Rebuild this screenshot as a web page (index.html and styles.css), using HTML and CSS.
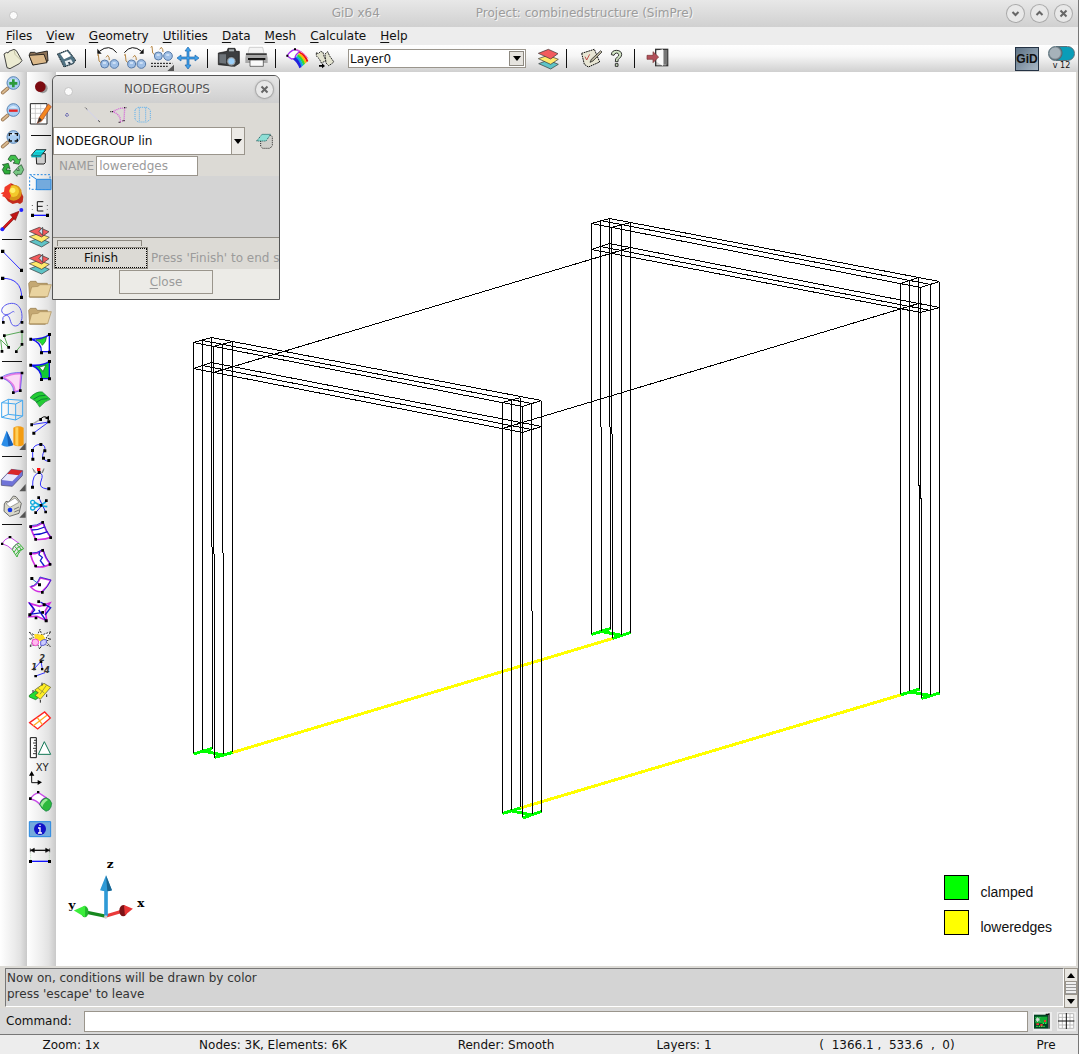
FILE: index.html
```html
<!DOCTYPE html>
<html lang="en">
<head>
<meta charset="utf-8">
<title>GiD x64 - Project: combinedstructure (SimPre)</title>
<link rel="stylesheet" href="styles.css">
</head>
<body>
<div class="app">
  <header class="titlebar">
    <span class="dot"></span>
    <h1 class="title"><span>GiD x64</span><span>Project: combinedstructure (SimPre)</span></h1>
    <div class="winbtns">
      <button class="round" aria-label="Minimize"><svg viewBox="0 0 17 17"><path d="M5.500 7l3 3 3-3"/></svg></button>
      <button class="round" aria-label="Maximize"><svg viewBox="0 0 17 17"><path d="M5.500 10l3-3 3 3"/></svg></button>
      <button class="round" aria-label="Close window"><svg viewBox="0 0 17 17"><path d="M5.500 5.500l6 6M11.500 5.500l-6 6"/></svg></button>
    </div>
  </header>

  <nav class="menubar">
    <a href="#"><u>F</u>iles</a><a href="#"><u>V</u>iew</a><a href="#"><u>G</u>eometry</a><a href="#"><u>U</u>tilities</a><a href="#"><u>D</u>ata</a><a href="#"><u>M</u>esh</a><a href="#"><u>C</u>alculate</a><a href="#"><u>H</u>elp</a>
  </nav>

  <div class="toolbar" role="toolbar">
    <button class="tool" aria-label="New"><svg viewBox="0 135 81 81"><path d="M12 162l8-5 4 2 3-5 15-6 7 4 17 30-8 9-28 15-9-3z" fill="#ecebd2" stroke="#222" stroke-width="2.500"/><path d="M42 149l3 14 17 17" fill="none" stroke="#aaa98a" stroke-width="2"/></svg></button>
    <button class="tool" aria-label="Open"><svg viewBox="81 135 81 81"><path d="M88 164l3-7h13l4 3 34-7 2 30-46 12z" fill="#8d7358" stroke="#111" stroke-width="2.500"/><path d="M87 166l45-3 9 25-42 7z" fill="#dcb98a" stroke="#111" stroke-width="2.500"/></svg></button>
    <button class="tool" aria-label="Save"><svg viewBox="162 135 81 81"><path d="M172 162l32-12 23 30-7 11-28 10z" fill="#4f7182" stroke="#182830" stroke-width="3" stroke-dasharray="4 2"/><path d="M181 162l20-8 12 14-21 10z" fill="#fff"/><path d="M194 184l19-6 6 10-20 8z" fill="#e6ecf0"/><path d="M203 187l6-2 4 6-6 2z" fill="#345"/></svg></button>
    <span class="vsep"></span>
    <button class="tool" aria-label="Previous view"><svg viewBox="285 135 81 81"><use href="#glasses" x="285" y="135"/><path d="M350 158q-22-28-52-4" fill="none" stroke="#111" stroke-width="3"/><path d="M292 146v15h13z" fill="#111"/></svg></button>
    <button class="tool" aria-label="Next view"><svg viewBox="366 135 81 81"><use href="#glasses" x="366" y="135"/><path d="M373 158q22-28 52-4" fill="none" stroke="#111" stroke-width="3"/><path d="M431 146v15h-13z" fill="#111"/></svg></button>
    <button class="tool" aria-label="Views"><svg viewBox="447 135 81 81"><use href="#glasses" x="446" y="111"/><path d="M453 190h64M453 199h50" stroke="#111" stroke-width="3" stroke-dasharray="6 3"/><path d="M522 194v19h-20z" fill="#555"/></svg></button>
    <button class="tool" aria-label="Pan"><svg viewBox="528 135 81 81"><path d="M564 141l9 12h-6v18h18v-6l12 9-12 9v-6h-18v18h6l-9 12-9-12h6v-18h-18v6l-12-9 12-9v6h18v-18h-6z" fill="#3ea0ea" stroke="#1a62a8" stroke-width="2"/></svg></button>
    <span class="vsep"></span>
    <button class="tool" aria-label="Snapshot"><svg viewBox="651 135 81 81"><path d="M655 159l26-5 3-9h21l3 9h10v36l-14 9-49-5z" fill="#3c3e40" stroke="#111" stroke-width="2"/><path d="M658 163h20v28l-20-3z" fill="#6d7378"/><path d="M687 148h15v6h-15z" fill="#a9b0b3"/><circle cx="694" cy="184" r="14" fill="#9aa1a6" stroke="#222" stroke-width="2"/><circle cx="694" cy="184" r="9" fill="#9bd0fa"/></svg></button>
    <button class="tool" aria-label="Print"><svg viewBox="732 135 81 81"><path d="M748 142h40l4 18h-48z" fill="#f4f4f4" stroke="#bbb" stroke-width="2"/><path d="M738 160h62l3 14v15h-67v-15z" fill="#a8a8a8"/><path d="M738 160h62v5h-62z" fill="#3b3b3b"/><path d="M744 174h52v6h-52z" fill="#111"/><path d="M750 180h40v19h-40z" fill="#fafafa" stroke="#333" stroke-width="2"/></svg></button>
    <span class="vsep"></span>
    <button class="tool" aria-label="Toggle geometry and mesh"><svg viewBox="855 135 81 81"><path d="M862 168q4-13 23-20l16 7q-16 8-16 20l-10 2z" fill="#fff" stroke="#a32bf0" stroke-width="4"/><path d="M885 148q22 3 39 27" fill="none" stroke="#f36bd0" stroke-width="3"/><path d="M899 155q19 8 26 28l-5 4q-6-18-23-28z" fill="#e11"/><path d="M897 159q17 10 23 28l-5 4q-6-16-21-28z" fill="#fb0"/><path d="M894 163q15 10 21 28l-5 5q-6-17-19-28z" fill="#3d3"/><path d="M891 167q13 10 19 29l-5 4q-6-15-18-27z" fill="#1ad"/><path d="M887 172q12 10 18 29l-7 4q-5-16-19-27z" fill="#22d"/><path d="M859 164h6v6h-6zM882 145h6v6h-6z"/></svg></button>
    <button class="tool" aria-label="Copy"><svg viewBox="936 135 81 81"><path d="M949 158l6 3 7-7 7 3 3 12 6 13-14 7-6-12-9-9z" fill="#e2e2cf" stroke="#111" stroke-width="2.500" stroke-dasharray="6 2"/><path d="M975 162l8-7 6 13 12 17-4 5-11 7-8-8z" fill="#e2e2cf" stroke="#111" stroke-width="2.500" stroke-dasharray="6 2"/><path d="M957 195h9v-5l9 8-9 7v-5h-9z"/></svg></button>
    <label class="combo combo-layer"><select aria-label="Layer"><option>Layer0</option></select><span class="arrow arrow-raised"></span></label>
    <button class="tool" aria-label="Layers"><svg viewBox="585 135 81 81"><use href="#layers" x="591" y="138"/></svg></button>
    <span class="vsep"></span>
    <button class="tool" aria-label="Notes"><svg viewBox="708 135 81 81"><path d="M725 160l38-12 16 38-34 15-12-8z" fill="#e8e6d4" stroke="#111" stroke-width="3" stroke-dasharray="5 2"/><path d="M735 170l5 10 9-17" fill="none" stroke="#b33" stroke-width="2.500"/><path d="M782 152l-28 26-4 9 9-4 27-27z" fill="#b7b29a" stroke="#111" stroke-width="2"/></svg></button>
    <button class="tool" aria-label="Help"><svg viewBox="789 135 81 81"><path d="M814 164q1-13 16-13 15 1 15 13 0 7-7 11-5 3-4 10h-8q-1-10 6-14 5-3 4-7-1-5-6-5-6 0-8 7zM826 191h8v8h-8z" fill="#d3e6c6" stroke="#111" stroke-width="2.500"/></svg></button>
    <span class="vsep"></span>
    <button class="tool" aria-label="Exit"><svg viewBox="912 135 81 81"><path d="M945 146h40v53h-40z" fill="#333"/><path d="M949 150h30v46h-30z" fill="#cfcfcf"/><path d="M950 152l19-4v50l-19-12z" fill="#fafafa"/><path d="M971 150h11v44h-11z" fill="#777"/><path d="M921 166h18v-11l17 16-17 17v-10h-18z" fill="#b2515b" stroke="#733" stroke-width="2"/></svg></button>
    <span class="spacer"></span>
    <button class="gid">GiD</button>
    <button class="switch"><span class="track"></span><span>v 12</span></button>
  </div>

  <main class="work">
    <div class="side side-a" role="toolbar">
      <button class="tool" aria-label="Zoom in"><svg viewBox="0 3 72 72"><use href="#lens" y="0"/><path d="M40 22v24M28 34h24" stroke="#2c9a3c" stroke-width="8"/></svg></button>
      <button class="tool" aria-label="Zoom out"><svg viewBox="0 84 72 72"><use href="#lens" y="81"/><path d="M27 116h26" stroke="#e42424" stroke-width="7"/></svg></button>
      <button class="tool" aria-label="Zoom frame"><svg viewBox="0 165 72 72"><use href="#lens" y="162"/><path d="M28 192v-7h8M44 185h8v7M52 200v7h-8M36 207h-8v-7" fill="none" stroke="#111" stroke-width="4"/></svg></button>
      <button class="tool" aria-label="Redraw"><svg viewBox="0 246 72 72"><g stroke="#12401c" stroke-width="2"><path d="M24 262l8-12h14l9 13 7-3-5 17-18-4 6-3-6-9-6 8z" fill="#41c04c"/><path d="M64 278l7 15-7 14H51v6l-11-12 11-12v6h7l-5-9z" fill="#78c884"/><path d="M30 306H14l-7-13 6-11-6-4 18-4 5 16-7-3-4 7h12z" fill="#2fae3b"/></g></svg></button>
      <button class="tool" aria-label="Render"><svg viewBox="0 327 72 72"><path d="M34 334l8 4 14 6 14 30-2 16-8 6-8-4-14 4-14-8-10-14z" fill="#c22b1c"/><circle cx="41" cy="362" r="24" fill="#d9981a"/><circle cx="40" cy="358" r="17" fill="#f3c92c"/><circle cx="38" cy="355" r="8" fill="#fff06a"/><path d="M33 333l-1 12-5 12 6 14-5 11-22-10 4-4-8-4 10-5 2-14z" fill="#f03a28"/></svg></button>
      <button class="tool" aria-label="Rotate"><svg viewBox="0 408 72 72"><path d="M8 471l37-38" stroke="#8c1010" stroke-width="8"/><path d="M9 469l36-36" stroke="#e01818" stroke-width="4"/><path d="M31 428l26-10-11 27z" fill="#c31414" stroke="#711" stroke-width="2"/><circle cx="7" cy="472" r="6" fill="#22f"/><circle cx="64" cy="414" r="6" fill="#22f"/></svg></button>
      <span class="hsep"></span>
      <button class="tool" aria-label="Line"><svg viewBox="0 531 72 72"><path d="M8 538l56 57" stroke="#33f" stroke-width="3"/><path d="M3 533h10v10H3zM60 590h9v10h-9z"/></svg></button>
      <button class="tool" aria-label="Arc"><svg viewBox="0 612 72 72"><path d="M8 619c36 0 57 18 57 57" fill="none" stroke="#33f" stroke-width="3"/><path d="M3 614h10v10H3zM60 671h9v10h-9z"/></svg></button>
      <button class="tool" aria-label="Curve"><svg viewBox="0 39 72 72"><path d="M10 97q-6-19 9-21c14 0 9 26 22 31 14 5 25-11 25-27C66 52 51 39 34 40 18 41 5 51 5 62c2 13 14 13 22 10 8-4 12-10 16-6" fill="none" stroke="#55e" stroke-width="3"/><path d="M6 93h8v8H6zM62 93h8v8h-8z"/></svg></button>
      <button class="tool" aria-label="Polyline"><svg viewBox="0 120 72 72"><path d="M6 183l-4-34 23 23-13-35 54-12v38L49 183" fill="none" stroke="#3a9a3a" stroke-width="2.500"/><path d="M9 133h8v8H9zM62 121h8v8h-8zM22 168h8v8h-8zM62 159h8v8h-8zM2 180h8v8H2zM45 181h8v8h-8z"/></svg></button>
      <span class="hsep"></span>
      <button class="tool" aria-label="NURBS surface"><svg viewBox="0 243 72 72"><path d="M9 263q28-14 54-12l-4 50-15 4q2-28-35-42z" fill="#fbd9f6" stroke="#e57be6" stroke-width="5"/><path d="M3 262q28-17 63-14l-5 54-20 6q2-30-38-46z" fill="none" stroke="#44e" stroke-width="2"/><path d="M1 260h8v8H1zM62 245h8v8h-8zM36 304h8v8h-8zM57 298h8v8h-8z"/></svg></button>
      <button class="tool" aria-label="Volume"><svg viewBox="0 324 72 72"><path d="M5 338l42 4v48L5 382zM5 338l20-10 43 3-21 11M68 331v47l-21 12M25 328v45l43 5M25 373L5 382" fill="none" stroke="#42a8f0" stroke-width="3"/></svg></button>
      <button class="tool" aria-label="Create object"><svg viewBox="0 405 72 72"><path d="M20 422l20 43q-20 10-36 0z" fill="#2b8de8"/><path d="M20 422l5 46q10 0 15-3z" fill="#1560b8"/><path d="M40 413q15-8 31 0v52q-15 8-31 0z" fill="#f39c12"/><path d="M46 412h9v56l-9-2z" fill="#ffd05a"/><path d="M77 458v22H58z" fill="#555"/></svg></button>
      <span class="hsep"></span>
      <button class="tool" aria-label="Delete"><svg viewBox="0 528 72 72"><path d="M4 569l30-31 34 4-1 15-30 32-33-3z" fill="#7074d8" stroke="#446" stroke-width="2"/><path d="M34 538l34 4-13 14-33-4z" fill="#d8272a"/><path d="M22 552l33 4-18 18-32-4z" fill="#e8e8fb"/><path d="M77 582v22H58z" fill="#555"/></svg></button>
      <button class="tool" aria-label="List"><svg viewBox="0 39 72 72"><path d="M13 72l5-8 8 2 14-18 8 2 16 20-7 30-28 9-17-15z" fill="#d9d8ca" stroke="#555" stroke-width="2.500"/><path d="M18 71l27-17 12 13-27 15z" fill="#fff" stroke="#777" stroke-width="2"/><circle cx="30" cy="90" r="7" fill="#13e"/><path d="M42 88l15-7M43 96l14-6" stroke="#777" stroke-width="3"/><path d="M77 93v20H58z" fill="#555"/></svg></button>
      <span class="hsep"></span>
      <button class="tool" aria-label="Mesh"><svg viewBox="0 162 72 72"><path d="M6 191q6-13 24-20l27 19q-14 3-20 19-12-13-31-18z" fill="#fff" stroke="#c84be8" stroke-width="3"/><path d="M37 209q5-16 20-19l14 16q-14 5-20 25zM42 217q7-15 20-19M47 224q7-13 20-17M44 199q10 10 14 19M51 194q10 8 13 17" fill="none" stroke="#3cb43c" stroke-width="3"/><path d="M3 188h7v7H3zM26 168h8v7h-8z"/></svg></button>
    </div>

    <div class="side side-b" role="toolbar">
      <button class="tool" aria-label="Record"><svg viewBox="84 6 72 72"><circle cx="128" cy="49" r="15" fill="#999"/><circle cx="121" cy="44" r="16" fill="#7c0a10"/></svg></button>
      <button class="tool" aria-label="Edit notes"><svg viewBox="84 87 72 72"><path d="M91 95h50v61H91z" fill="#fff" stroke="#222" stroke-width="3"/><path d="M92 110h48M92 124h48M92 139h48M106 96v59M122 96v59" stroke="#bbb" stroke-width="2"/><path d="M112 154l6-18 27-40 9 8-28 42z" fill="#f5871f" stroke="#943" stroke-width="2"/><path d="M112 154l6-18 8 8z" fill="#333"/></svg></button>
      <span class="hsep"></span>
      <button class="tool" aria-label="Erase conditions"><svg viewBox="84 213 72 72"><path d="M108 245h28v27l-4 4h-22z" fill="#ccc" stroke="#222" stroke-width="3"/><path d="M94 250l14-17h30l-14 17z" fill="#19e6ee" stroke="#111" stroke-width="2.500"/><path d="M94 250h30v6h-30z" fill="#08a5b0"/><path d="M104 243h25" stroke="#088" stroke-width="2"/></svg></button>
      <button class="tool" aria-label="Frame"><svg viewBox="84 294 72 72"><path d="M89 308h61v44H89z" fill="none" stroke="#2788e0" stroke-width="3" stroke-dasharray="6 5"/><path d="M109 322h44v31h-44z" fill="#74aadd" stroke="#2788e0" stroke-width="3"/><path d="M92 310l18 12" stroke="#2788e0" stroke-width="3"/></svg></button>
      <button class="tool" aria-label="Entity labels"><svg viewBox="84 375 72 72"><path d="M130 389h-18v28h18M112 403h16" fill="none" stroke="#111" stroke-width="3"/><path d="M97 430h46" stroke="#11f" stroke-width="4"/><path d="M93 425h9v10h-9zM138 425h9v10h-9z"/><path d="M97 399v14M142 399v14" stroke="#555" stroke-width="3" stroke-dasharray="3 9"/></svg></button>
      <button class="tool" aria-label="Layer to use"><svg viewBox="84 456 72 72"><use href="#layers" x="84" y="456"/><path d="M117 478l11-12v24z" fill="#cde" stroke="#222" stroke-width="2"/></svg></button>
      <button class="tool" aria-label="Layer on"><svg viewBox="84 537 72 72"><use href="#layers" x="84" y="537"/><path d="M117 559l11-12v24z" fill="#cde" stroke="#222" stroke-width="2"/></svg></button>
      <button class="tool" aria-label="Folder"><svg viewBox="84 618 72 72"><use href="#folder" x="84" y="618"/></svg></button>
      <button class="tool" aria-label="Group folder"><svg viewBox="84 618 72 72"><use href="#folder" x="84" y="618"/></svg></button>
      <button class="tool" aria-label="Hole surface"><svg viewBox="84 126 72 72"><path d="M92 147q35 2 56-13v51h-24q1-29-32-38z" fill="#fff" stroke="#11e" stroke-width="4"/><path d="M108 150q18 0 31-9 1 14-12 25-5-12-19-16z" fill="#2d3" stroke="#161" stroke-width="2"/><path d="M88 143h8v9h-8zM144 129h9v9h-9zM120 184h9v9h-9zM144 182h9v9h-9z"/></svg></button>
      <button class="tool" aria-label="Fill surface"><svg viewBox="84 207 72 72"><path d="M92 225q35 4 56-11v52h-24q1-29-32-41z" fill="#1c3" stroke="#11e" stroke-width="4"/><path d="M118 232l20-7-9 19z" fill="#fff" stroke="#161" stroke-width="2"/><path d="M88 221h8v9h-8zM144 210h9v9h-9zM120 264h9v9h-9zM144 262h9v9h-9z"/></svg></button>
      <button class="tool" aria-label="Parallel surfaces"><svg viewBox="84 288 72 72"><path d="M90 323q18-20 37-17l24 22q-15 4-32 23-9-20-29-28z" fill="#2c3" stroke="#173" stroke-width="2"/><path d="M100 328q17-14 36-12M109 337q15-13 34-11" fill="none" stroke="#053" stroke-width="2"/></svg></button>
      <button class="tool" aria-label="Rotate line"><svg viewBox="84 369 72 72"><path d="M95 404l51-8-45 33" fill="none" stroke="#33f" stroke-width="3"/><path d="M95 404l26-16" stroke="#aaa" stroke-width="4"/><path d="M124 384q8-6 15-3" fill="none" stroke="#111" stroke-width="3"/><path d="M147 377v14l-13-7z"/><path d="M91 400h8v9h-8zM118 384h8v9h-8zM142 391h9v9h-9zM97 425h9v9h-9z"/></svg></button>
      <button class="tool" aria-label="Edit curve"><svg viewBox="84 450 72 72"><path d="M98 508v-28q3-16 23-17 19 2 12 20-10 16-1 25 6 6 14 5" fill="none" stroke="#33f" stroke-width="3"/><path d="M94 503h9v9h-9zM93 477h9v9h-9zM118 459h9v9h-9zM130 478h9v9h-9zM126 500h9v9h-9zM142 507h9v9h-9z"/></svg></button>
      <button class="tool" aria-label="Move point"><svg viewBox="84 531 72 72"><path d="M98 590q-2-38 21-42 12 5 5 22-8 19 6 24 8 3 17 3" fill="none" stroke="#33f" stroke-width="3"/><path d="M97 535l12 15M132 535l-7 14M103 548l-3-10M127 549l5-11" stroke="#777" stroke-width="2.500"/><path d="M111 534h10v9h-10z" fill="#f11"/><path d="M113 543h9v9h-9zM93 587h9v9h-9zM142 592h9v9h-9z"/></svg></button>
      <button class="tool" aria-label="Cut"><svg viewBox="84 42 72 72"><path d="M107 98l32-37M116 52l21 44" stroke="#22e" stroke-width="3"/><path d="M102 66l22 12 18 2M102 84l22-10 14-8" fill="none" stroke="#1ad" stroke-width="5"/><circle cx="98" cy="67" r="6" fill="none" stroke="#1ad" stroke-width="4"/><circle cx="98" cy="84" r="6" fill="none" stroke="#1ad" stroke-width="4"/><path d="M112 49h8v8h-8zM135 58h8v8h-8zM133 92h8v8h-8zM103 94h8v8h-8zM119 72h8v8h-8z"/></svg></button>
      <button class="tool" aria-label="Divide surface"><svg viewBox="84 123 72 72"><path d="M91 140q20 1 38-12 8 26 24 44-20 8-46 6-10-20-16-38z" fill="#fff" stroke="#d02be0" stroke-width="5"/><path d="M95 150q20 0 39-9M101 164q22 0 42-9" fill="none" stroke="#11c" stroke-width="4"/><path d="M91 137q20 1 38-12 8 28 24 48" fill="none" stroke="#22c" stroke-width="2.500"/><path d="M88 136h8v8h-8zM124 123h8v8h-8zM148 169h8v8h-8zM103 174h8v8h-8z"/></svg></button>
      <button class="tool" aria-label="Split surface"><svg viewBox="84 204 72 72"><path d="M91 221q20 2 38-11 6 24 22 42-18 12-44 8-12-20-16-39z" fill="#fff" stroke="#d02be0" stroke-width="5"/><path d="M119 214l-2 10 10 8-6 10 12 16" fill="none" stroke="#12c" stroke-width="4"/><path d="M91 219q20 2 38-11 8 28 24 46" fill="none" stroke="#22c" stroke-width="2.500"/><path d="M88 217h8v8h-8zM124 207h8v8h-8zM146 249h8v8h-8zM103 254h8v8h-8z"/></svg></button>
      <button class="tool" aria-label="Trim surface"><svg viewBox="84 285 72 72"><path d="M92 321q19-2 29-27l31 7q-10 21-27 34-17 2-33-14z" fill="#fff" stroke="#d02be0" stroke-width="4"/><path d="M92 319q18-2 28-28l33 9q-10 22-26 37" fill="none" stroke="#22c" stroke-width="2.500"/><path d="M95 296l24 18" stroke="#27c" stroke-width="3"/><path d="M91 291h9v9h-9zM114 310h9v9h-9zM123 333h8v8h-8z"/></svg></button>
      <button class="tool" aria-label="Intersect surfaces"><svg viewBox="84 366 72 72"><path d="M89 370l30 9 31-10-14 23 4 30-29-13-24 1 14-24z" fill="#fff" stroke="#d02be0" stroke-width="5"/><path d="M87 368l17 22-16 19M121 366l31 17-17 22M116 390l22 32M90 403l40-6" fill="none" stroke="#11c" stroke-width="4"/><path d="M85 400h9v9h-9zM112 361h8v8h-8zM128 370h9v9h-9zM124 393h8v8h-8zM134 418h9v9h-9zM104 410h8v8h-8z"/></svg></button>
      <button class="tool" aria-label="Explode"><svg viewBox="84 447 72 72"><path d="M88 457l23 12 9-21 5 17 28-10-15 19 15 3-16 7 14 15-23-8-9 16-7-16-23 9 11-18-12-6 14-3z" fill="#fff" stroke="#111" stroke-width="2.500" stroke-dasharray="6 3"/><path d="M103 462l26 2 8 14-12 6-20-4z" fill="#fd2"/><circle cx="106" cy="487" r="10" fill="#fbe" stroke="#e4c" stroke-width="3"/><path d="M122 484l8-5h9v11l-7 6h-10z" fill="#ccf" stroke="#44c" stroke-width="2.500"/></svg></button>
      <button class="tool" aria-label="Renumber"><svg viewBox="84 528 72 72"><path d="M103 566l20-22 4 22M107 588l28-10" fill="none" stroke="#33f" stroke-width="3"/><path d="M119 543h8v6h-8zM99 564h7v7h-7zM123 564h7v7h-7zM103 585h8v7h-8z"/><g font-family="DejaVu Sans" font-style="italic" font-weight="bold" font-size="25" fill="#333"><text x="118" y="544">2</text><text x="94" y="570">1</text><text x="132" y="578">4</text></g></svg></button>
      <button class="tool" aria-label="Mesh layers"><svg viewBox="84 39 72 72"><path d="M88 76l19-14 16 15-16 12-19-8z" fill="#2d3" stroke="#161" stroke-width="2"/><path d="M104 60l28-20 20 12-31 36-16-12 10-8z" fill="#fe2" stroke="#552" stroke-width="2"/><path d="M113 54l20 15M120 73l19-27" stroke="#774" stroke-width="2"/><path d="M99 60v8M126 38v9M140 73v8M121 90v8" stroke="#222" stroke-width="3"/></svg></button>
      <button class="tool" aria-label="Quad mesh"><svg viewBox="84 120 72 72"><path d="M89 158l45-32 17 18-38 33z" fill="#fff" stroke="#f22" stroke-width="4"/><path d="M100 167l41-31M112 143l15 21" stroke="#fa2" stroke-width="4"/></svg></button>
      <button class="tool" aria-label="Measure"><svg viewBox="84 201 72 72"><path d="M91 203h18v60H91z" fill="#fff" stroke="#111" stroke-width="3"/><path d="M102 211h6M99 219h9M102 227h6M99 235h9M102 243h6M99 251h9" stroke="#111" stroke-width="2.500"/><path d="M133 215l19 38h-37z" fill="#fff" stroke="#175" stroke-width="3"/></svg></button>
      <button class="tool" aria-label="Coordinates"><svg viewBox="84 282 72 72"><text x="107" y="304" font-family="DejaVu Sans" font-size="30" fill="#222">XY</text><path d="M95 312v26h20" fill="none" stroke="#111" stroke-width="3"/><path d="M87 317l8-14 8 14zM113 330l13 7-13 8z"/></svg></button>
      <button class="tool" aria-label="Render mesh"><svg viewBox="84 363 72 72"><path d="M91 387q8-14 25-19l22 15q-15 5-19 20-10-13-28-16z" fill="#fff" stroke="#c84be8" stroke-width="4"/><path d="M119 403q4-15 19-20 14 4 17 17 0 12-8 20l-9 4q-15-8-19-21z" fill="#2db83c" stroke="#174" stroke-width="2"/><path d="M121 403q5-13 17-17l6 4q-14 8-17 22z" fill="#9be896"/><path d="M87 382h8v8h-8zM111 363h7v7h-7z"/></svg></button>
      <button class="tool" aria-label="Information"><svg viewBox="84 444 72 72"><path d="M88 455h64v45H88z" fill="#74aadd" stroke="#2788e0" stroke-width="3"/><circle cx="120" cy="477" r="18" fill="#1212c8"/><path d="M120 464v4M114 474h6v15M114 489h12" stroke="#fff" stroke-width="4" fill="none"/></svg></button>
      <button class="tool" aria-label="Distance"><svg viewBox="84 525 72 72"><path d="M91 541h58" stroke="#111" stroke-width="4"/><path d="M91 535v12M149 535v12M103 535l-11 6 11 6zM137 535l11 6-11 6z" stroke="#111" stroke-width="2"/><path d="M92 550v20M148 550v20" stroke="#9c9" stroke-width="2" stroke-dasharray="3 3"/><path d="M92 574h56" stroke="#11f" stroke-width="4"/><path d="M87 570h9v9h-9zM144 570h9v9h-9z"/></svg></button>
    </div>

    <section class="canvas">
      <svg class="model" viewBox="56 72 1020 894" shape-rendering="crispEdges">
        <g fill="none" stroke="#ff0" stroke-width="3">
          <path d="M232.500 752.500L612.500 638.500M520.500 808L900.500 695"/>
        </g>
        <g fill="none" stroke="#0f0" stroke-width="3">
          <path d="M193.500 754L212 748.500M214.500 757.500L232.500 752.500M203 751L223 755"/>
          <path d="M502.500 813.500L520.500 808M522.500 818L541.500 811.500M512 811L532 815"/>
          <path d="M591.500 634.500L610.500 628.500M612.500 638.500L630.500 632.500M602 631.500L622 635.500"/>
          <path d="M900.500 695L919.500 689M921.500 698.500L939.500 693M910 692L931 695.500"/>
        </g>
        <g fill="none" stroke="#000" stroke-width="1">
          <path d="M211.500 337.500L541.500 400.500M202.500 340.500L531.500 403.500M193.500 342.500L522.500 406.500M211.500 362.500L541.500 426.500M202.500 365.500L531.500 429.500M193.500 368.500L522.500 432.500"/>
          <path d="M193.500 342.500L211.500 337.500M213.500 346.500L232.500 341.500M193.500 368.500L211.500 362.500M502.500 402.500L520.500 397.500M522.500 406.500L541.500 400.500M522.500 432.500L541.500 426.500"/>
          <path d="M193.500 342.500V753M202.500 340.500V750M211.500 337.500L212.500 749M213.500 346.500L214.500 758M222.500 344.500L223.500 754M232.500 341.500V752"/>
          <path d="M502.500 402.500V813M511.500 399.500V810M520.500 397.500V807M522.500 406.500V817M531.500 403.500L532.500 814M541.500 400.500V812"/>
          <path d="M609.500 218.500L939.500 281.500M600.500 220.500L930.500 284.500M591.500 223.500L920.500 287.500M609.500 243.500L939.500 307.500M600.500 246.500L930.500 310.500M591.500 249.500L920.500 312.500"/>
          <path d="M591.500 223.500L609.500 218.500M611.500 227.500L630.500 222.500M591.500 249.500L609.500 243.500M900.500 283.500L918.500 277.500M920.500 287.500L939.500 281.500M920.500 312.500L939.500 307.500"/>
          <path d="M591.500 223.500V634M600.500 220.500L601.500 631M609.500 218.500L610.500 629M611.500 227.500L612.500 638M621.500 224.500V635M630.500 222.500V633"/>
          <path d="M900.500 283.500V694M909.500 280.500V691M918.500 277.500L919.500 689M920.500 287.500L921.500 698M930.500 284.500V695M939.500 281.500V693"/>
          <path d="M213.500 372.500L630.500 247.500M502.500 428.500L918.500 303.500"/>
        </g>
      </svg>
      <svg class="axes" viewBox="195 20 255 190">
        <path d="M318 198l67-20" stroke="#ea3a3a" stroke-width="10"/><ellipse cx="370" cy="182" rx="12" ry="17" fill="#7d1216"/><path d="M372 165l27 11-24 20z" fill="#e83434"/>
        <path d="M316 198l-70-14" stroke="#17881f" stroke-width="10"/><ellipse cx="254" cy="185" rx="11" ry="17" fill="#22b52c"/><path d="M221 181l34-15v36z" fill="#3bee3b"/>
        <path d="M318 198v-80" stroke="#2f9ad6" stroke-width="11"/><path d="M318 75l18 45q-18 6-36 0z" fill="#2f9ad6"/><path d="M318 75l18 45q-6 3-14 3z" fill="#1a648f"/><circle cx="317" cy="201" r="5" fill="#ccc"/>
        <g font-family="DejaVu Serif" font-weight="bold" font-size="36"><text x="320" y="53">z</text><text x="412" y="170">x</text><text x="205" y="177">y</text></g>
      </svg>
      <ul class="legend"><li><span class="swatch green"></span><span>clamped</span></li><li><span class="swatch yellow"></span><span>loweredges</span></li></ul>
    </section>

    <section class="dialog" role="dialog" aria-labelledby="dlg-title">
      <header class="dlg-title"><span class="dot"></span><h2 id="dlg-title">NODEGROUPS</h2><button class="round" aria-label="Close dialog"><svg viewBox="0 0 17 17"><path d="M5.500 5.500l6 6M11.500 5.500l-6 6"/></svg></button></header>
      <div class="dlg-kinds">
        <button class="kind" aria-label="Points"><svg viewBox="186 104 72 54"><path d="M201 126l5 5-5 5-5-5z" fill="none" stroke="#229" stroke-width="3" stroke-dasharray="4 2"/></svg></button>
        <button class="kind" aria-label="Lines"><svg viewBox="242 104 72 54"><path d="M249 112l38 38" stroke="#d2d2ee" stroke-width="3"/><path d="M246 109l6 6M284 147l7 6" stroke="#222" stroke-width="3" stroke-dasharray="3 2"/></svg></button>
        <button class="kind" aria-label="Surfaces"><svg viewBox="308 104 72 54"><path d="M323 121q15-11 35-11l-2 37-11 4q2-20-22-30z" fill="none" stroke="#d55bd8" stroke-width="4" stroke-dasharray="3 3"/><path d="M315 121h9M356 109h7M352 148h7M340 153h6" stroke="#222" stroke-width="4" stroke-dasharray="3 2"/></svg></button>
        <button class="kind" aria-label="Volumes"><svg viewBox="380 104 72 54"><path d="M389 115l9-7h27l10 8v28l-11 8h-26l-9-8zM402 109v42M421 109v42" fill="none" stroke="#55aef0" stroke-width="3" stroke-dasharray="3 3"/></svg></button>
      </div>
      <div class="dlg-select">
        <label class="combo combo-group"><select aria-label="Condition"><option>NODEGROUP lin</option></select><span class="arrow"></span></label>
        <button class="kind" aria-label="Unassign"><svg viewBox="762 180 60 54"><path d="M782 203l8-14h20l7 5v27l-7 8h-22l-6-6z" fill="#d0d0cb" stroke="#222" stroke-width="3" stroke-dasharray="3 3"/><path d="M770 207l16-20h26l-14 20z" fill="#8edfd6" stroke="#155" stroke-width="3" stroke-dasharray="3 3"/></svg></button>
      </div>
      <div class="dlg-name"><label for="ng-name">NAME</label><input id="ng-name" value="loweredges" disabled></div>
      <div class="dlg-fill"></div>
      <div class="dlg-strip"><span class="cut"></span></div>
      <div class="dlg-finish"><button class="finish">Finish</button><span>Press 'Finish' to end s</span></div>
      <div class="dlg-close"><button disabled><u>C</u>lose</button></div>
    </section>
  </main>

  <section class="messages">
    <div class="log" role="log"><p>Now on, conditions will be drawn by color</p><p>press 'escape' to leave</p></div>
    <div class="scroll"><button aria-label="Scroll up"><i class="tri up"></i></button><span class="thumb"></span><button aria-label="Scroll down"><i class="tri"></i></button></div>
  </section>

  <form class="command">
    <label for="cmd">Command:</label><input id="cmd" type="text">
    <button type="button" aria-label="Calculator"><svg viewBox="882 456 57 57"><path d="M885 464h42v42h-42z" fill="#042"/><path d="M889 470h36v20h-36z" fill="#1a3"/><path d="M890 479h12M896 472v14M891 473l11 11M902 473l-11 11" stroke="#ddd" stroke-width="3"/><path d="M892 490h8v5h-8zM904 492h7v8h-7zM915 480h6v6h-6z" fill="#e33"/><path d="M892 499h28M911 490h12" stroke="#4e5" stroke-width="4" stroke-dasharray="4 3"/><path d="M930 460v46M920 463h10" stroke="#111" stroke-width="4"/></svg></button>
    <button type="button" aria-label="Grid"><svg viewBox="951 456 57 57"><path d="M955 460h46v46h-46z" fill="#fff"/><path d="M956 461h45v44h-45zM967 461v44M990 461v44M956 472h45M956 495h45" fill="none" stroke="#bbb" stroke-width="3"/><path d="M979 459v48M954 483h49" stroke="#111" stroke-width="3"/></svg></button>
  </form>

  <footer class="status"><span>Zoom: 1x</span><span>Nodes: 3K, Elements: 6K</span><span>Render: Smooth</span><span>Layers: 1</span><span class="coords">(&nbsp; 1366.1 ,&nbsp; 533.6&nbsp; ,&nbsp; 0)</span><span>Pre</span></footer>
</div>

<svg class="symbols" width="0" height="0">
  <defs>
    <g id="glasses"><path d="M6 31l4-3 2 20 7 6M33 37l5-6 4 6 1 8" fill="none" stroke="#b58542" stroke-width="3"/><circle cx="29" cy="57" r="12" fill="#9fbfe6" stroke="#587ba8" stroke-width="3"/><circle cx="58" cy="57" r="13" fill="#9fbfe6" stroke="#587ba8" stroke-width="3"/><path d="M24 54h9M53 54h9" stroke="#dceafa" stroke-width="5"/></g>
    <g id="layers" stroke="#333" stroke-width="2"><path d="M5 53l29-11 30 13-23 14z" fill="#5ec3c6"/><path d="M4 38l29-10 31 12-23 15z" fill="#ffe96b"/><path d="M4 22l30-12 29 13-22 16z" fill="#f25b5d"/></g>
    <g id="folder"><path d="M2 16l5-6h17l4 6h30v34l-6 8H5z" fill="#c4a873" stroke="#93784a" stroke-width="2"/><path d="M3 56l8-29 19-2 6-5h34l-11 36z" fill="#e9d3a0" stroke="#a98d59" stroke-width="2"/></g>
    <g id="lens"><path d="M8 62l15-13" stroke="#987450" stroke-width="11" stroke-linecap="round"/><path d="M8 62l15-13" stroke="#d9b98e" stroke-width="6" stroke-linecap="round"/><circle cx="40" cy="33" r="19" fill="#a9cdf2" stroke="#5a86b5" stroke-width="3"/><path d="M27 28q12-15 26 0" fill="#d6e9fb"/></g>
  </defs>
</svg>
</body>
</html>
```
FILE: styles.css
```css
* { box-sizing: border-box; }
body { margin: 0; font: 12px/16px "DejaVu Sans", sans-serif; color: #111; }
button, input, select { font: inherit; color: inherit; margin: 0; }
button { padding: 0; border: 0; background: none; }
svg { display: block; overflow: visible; }
h1, h2, p, ul { margin: 0; padding: 0; font-size: 12px; font-weight: normal; list-style: none; }
u { text-underline-offset: 2px; }
.symbols { position: absolute; }

.app { display: grid; grid-template-rows: 27px 18px 27px 1fr auto auto auto; height: 100vh; min-height: 700px; border-right: 1px solid #777; background: #dcdad5; }

.titlebar { display: flex; align-items: center; padding: 0 6px 1px 9px; background: linear-gradient(#e8e8e8, #d0d0d0); color: #9c9c9c; text-shadow: 1px 1px #f6f6f6; }
.dot { flex: none; width: 9px; height: 9px; margin-top: 4px; border: 1px solid #c4c4c4; border-radius: 50%; background: #fbfbfb; }
.title { flex: 1; display: flex; justify-content: center; gap: 96px; }
.winbtns { display: flex; gap: 7px; }
.round { flex: none; width: 17px; height: 17px; border-radius: 50%; background: #e8e8e8; box-shadow: 0 0 0 1px #aaa; }
.round svg { width: 17px; height: 17px; fill: none; stroke: #666; stroke-width: 2; }

.menubar { display: flex; gap: 14px; padding: 1px 6px; background: #ededed; }
.menubar a { color: #111; text-decoration: none; }

.toolbar { display: flex; align-items: center; background: linear-gradient(#fff, #f6f6f6 40%, #d0d0d0); }
.toolbar .tool, .toolbar .tool svg { width: 27px; height: 27px; }
.vsep { width: 14px; height: 19px; display: flex; }
.vsep::before { content: ""; width: 1px; height: 19px; margin-left: 4px; background: #111; }
.spacer { flex: 1; }
.combo { position: relative; display: flex; background: #fff; border: 1px solid #9a958c; }
.combo select { width: 100%; padding: 0 1px; border: 0; background: none; appearance: none; }
.arrow { position: absolute; right: 0; top: 0; bottom: 0; width: 13px; display: grid; place-items: center; background: #e6e4df; border-left: 1px solid #9a958c; }
.arrow::before, .tri { content: ""; border: 4px solid transparent; border-top: 5px solid #000; border-bottom: 0; }
.combo-layer { width: 178px; height: 19px; margin: 0 9px; }
.combo-layer .arrow { inset: 1px 1px 1px auto; border: 1px solid #8d8981; width: 15px; }
.gid { width: 24px; height: 24px; margin-right: 9px; border: 1px solid #243244; background: linear-gradient(135deg, #5d7285, #a9b8c6); font: bold 12px "Liberation Sans", sans-serif; }
.switch { display: flex; flex-direction: column; align-items: center; width: 27px; height: 25px; margin-right: 3px; font: 8px/9px "DejaVu Sans", sans-serif; }
.track { width: 27px; height: 15px; border: 1px solid #58707a; border-radius: 8px; background: radial-gradient(circle at 6px 6px, #a6b2ba 5px, #57656e 7px, #0a9db8 8px); }

.work { position: relative; display: flex; min-height: 0; background: #fff; border-right: 2px solid #dcdad5; }
.side { display: flex; flex-direction: column; background: linear-gradient(90deg, #fff, #ebebeb 55%, #e2e2e2 75%, #c9c9c9); }
.side .tool { height: 27px; padding: 1px 0 2px; }
.side .tool svg { width: 24px; height: 24px; }
.side-a { width: 27px; }
.side-b { width: 29px; padding: 1px 0 0 1px; }
.hsep { height: 14px; padding: 5px 5px 0 2px; }
.side-b .hsep { height: 15px; padding: 8px 5px 0 3px; }
.hsep::before { content: ""; display: block; height: 1px; background: #111; }
.canvas { position: relative; flex: 1; min-width: 0; background: #fff; }
.model { width: 100%; height: 100%; }
.axes { position: absolute; left: 9px; bottom: 46px; width: 85px; height: 63px; }
.legend { position: absolute; right: 24px; bottom: 31px; display: grid; gap: 10px; font: 14px/25px "Liberation Sans", sans-serif; }
.legend li { display: flex; gap: 11px; height: 25px; }
.legend li span:last-child { padding-top: 5px; }
.swatch { width: 25px; height: 25px; border: 1px solid #000; }
.green { background: #0f0; }
.yellow { background: #ff0; }

.dialog { position: absolute; left: 52px; top: 3px; width: 228px; overflow: hidden; border: 1px solid #555; border-radius: 6px 6px 0 0; background: #dcdad5; color: #9b9b9b; }
.dlg-title { display: flex; align-items: center; height: 27px; padding: 0 6px 1px 11px; background: linear-gradient(#e6e6e6, #cfcfcf); color: #555; text-shadow: 1px 1px #f4f4f4; }
.dlg-title h2 { flex: 1; padding-left: 5px; text-align: center; }
.dlg-title .round { box-shadow: 0 0 0 1px #aaa, 0 0 3px #888; }
.dlg-kinds { display: flex; align-items: center; height: 24px; padding: 3px 9px; }
.kind svg { width: 24px; height: 18px; }
.dlg-kinds .kind:nth-child(2) { margin-left: -2px; }
.dlg-select { display: flex; align-items: center; justify-content: space-between; padding: 0 3px 0 0; }
.combo-group { width: 192px; height: 28px; color: #111; }
.combo-group select { padding-left: 2px; }
.combo-group .arrow { background: #eceae6; }
.dlg-name { display: flex; align-items: center; padding-left: 6px; height: 21px; }
.dlg-name input { width: 102px; height: 20px; margin-left: 2px; padding: 0 2px; border: 1px solid #9a958c; background: #fff; color: #9b9b9b; }
.dlg-fill { height: 61px; background: #d4d4d4; }
.dlg-strip { display: flex; align-items: flex-end; height: 9px; border-top: 1px solid #8d8981; padding-left: 4px; overflow: hidden; }
.cut { width: 85px; height: 6px; border: 1px solid #8d8981; border-bottom: 0; }
.dlg-finish { display: flex; align-items: center; gap: 3px; height: 23px; padding-left: 1px; white-space: nowrap; }
.finish { flex: none; width: 94px; height: 22px; border: 1px solid #8d8981; outline: 1px dotted #000; outline-offset: -2px; color: #111; }
.dlg-close { padding: 1px 0 5px; background: #ecebe7; text-align: center; }
.dlg-close button { width: 94px; height: 24px; border: 1px solid #9a958c; color: #9b9b9b; }

.messages { display: flex; padding: 2px 0 0 5px; }
.log { flex: 1; height: 39px; padding: 1px 1px; border: 1px solid; border-color: #777 #fff #fff #777; background: #d4d4d4; color: #333; overflow: hidden; }
.scroll { display: flex; flex-direction: column; width: 14px; height: 40px; border: 1px solid #9a958c; }
.scroll button { flex: 1; display: grid; place-items: center; background: #e8e6e1; }
.up { transform: rotate(180deg); }
.thumb { height: 14px; border: 1px solid #9a958c; background: repeating-linear-gradient(#eee 0 2px, #999 2px 3px); }

.command { display: flex; align-items: center; gap: 5px; height: 27px; padding: 0 2px 0 6px; background: #d9d9d9; border-bottom: 1px solid #777; }
.command label { flex: none; width: 73px; }
.command input { flex: 1; min-width: 0; height: 21px; border: 1px solid #9a958c; background: #fff; }
.command button { background: #ededed; }
.command svg { width: 19px; height: 19px; }

.status { display: grid; grid-template-columns: 142fr 262fr 204fr 152fr 254fr 64fr; align-items: center; height: 19px; background: #ededed; text-align: center; white-space: nowrap; }
```
